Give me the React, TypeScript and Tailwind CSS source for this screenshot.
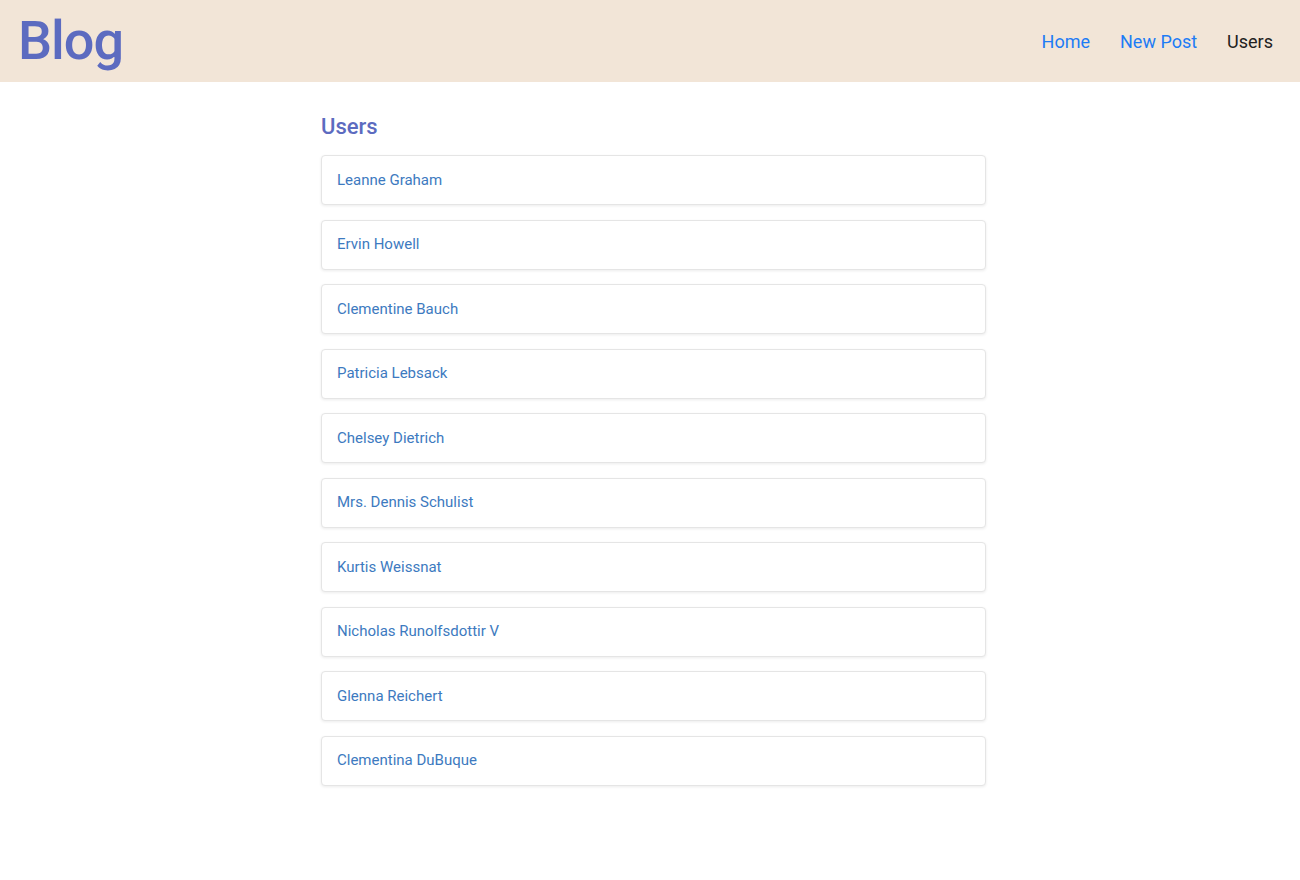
import React from "react";

const users = [
  "Leanne Graham",
  "Ervin Howell",
  "Clementine Bauch",
  "Patricia Lebsack",
  "Chelsey Dietrich",
  "Mrs. Dennis Schulist",
  "Kurtis Weissnat",
  "Nicholas Runolfsdottir V",
  "Glenna Reichert",
  "Clementina DuBuque",
];

export default function App() {
  return (
    <div className="min-h-screen bg-white font-['Roboto',sans-serif]">
      <header className="h-[82px] bg-[#f2e5d7] flex items-center justify-between pl-[18px] pr-[27px]">
        <a className="text-[54px] leading-none font-medium text-[#5c6bc0] tracking-[-1px]">Blog</a>
        <nav className="flex items-center gap-[30px] text-[18px]">
          <a className="text-[#1e7cf5]">Home</a>
          <a className="text-[#1e7cf5]">New Post</a>
          <a className="text-[#212121]">Users</a>
        </nav>
      </header>
      <main className="flex justify-center">
        <div className="w-[665px] ml-[7px] pt-[30px]">
          <h2 className="text-[22px] font-medium text-[#5c6bc0] leading-[30px] mb-[13px]">Users</h2>
          <ul className="flex flex-col gap-[14.5px]">
            {users.map((u) => (
              <li
                key={u}
                className="h-[50px] flex items-center px-[15px] border border-[#e5e5e5] rounded-[4px] shadow-[0_1px_3px_rgba(0,0,0,0.08)] bg-white"
              >
                <a className="text-[15px] text-[#3d7ac0]">{u}</a>
              </li>
            ))}
          </ul>
        </div>
      </main>
    </div>
  );
}
